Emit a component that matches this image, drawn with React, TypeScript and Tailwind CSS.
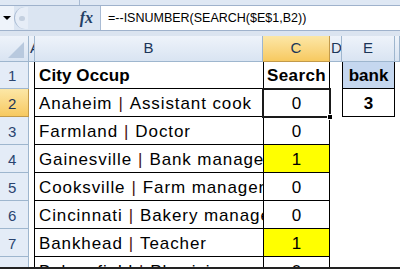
import React from 'react';

const rows = [
  { n: 1, b: 'City Occup', c: 'Search', bold: true },
  { n: 2, b: 'Anaheim | Assistant cook', c: '0' },
  { n: 3, b: 'Farmland | Doctor', c: '0' },
  { n: 4, b: 'Gainesville | Bank manager', c: '1', hit: true },
  { n: 5, b: 'Cooksville | Farm manager', c: '0' },
  { n: 6, b: 'Cincinnati | Bakery manager', c: '0' },
  { n: 7, b: 'Bankhead | Teacher', c: '1', hit: true },
  { n: 8, b: 'Bakersfield | Physician', c: '0' },
];

const hdr = 'flex items-center justify-center overflow-hidden border-r border-b border-[#9eb6ce] bg-gradient-to-b from-[#eef3fa] to-[#d9e4f2] text-[15px] text-[#1b3558]';
const selHdr = 'flex items-center justify-center overflow-hidden border-r border-b border-[#c29a4a] bg-gradient-to-b from-[#fce7a6] to-[#f7c95f] text-[15px] text-[#1b3558]';

function CellText({ text }: { text: string }) {
  const parts = text.split(' | ');
  if (parts.length < 2) return <span>{text}</span>;
  return (
    <span>
      {parts[0]}
      <span className="mx-[6px] text-[#4a1515]">|</span>
      {parts[1]}
    </span>
  );
}

export default function App() {
  return (
    <div className="relative flex h-[269px] w-[400px] flex-col overflow-hidden border-b-2 border-[#222] bg-[#dbe4f0] font-['Liberation_Sans',Arial,sans-serif]">
      {/* ribbon edge */}
      <div className="flex h-[6px] shrink-0 border-b border-[#9fb2cc] bg-[#dfe8f4]">
        <div className="w-[80px] border-r border-[#a9bbd3]" />
      </div>

      {/* formula bar */}
      <div className="flex h-[25px] shrink-0 border-b border-[#9fb2cc]">
        <div className="flex w-[100px] items-center bg-[#dbe5f2]">
          <div className="flex h-full w-[14px] items-center justify-center bg-[#eef3fa]">
            <div className="h-0 w-0 border-x-[4px] border-t-[4px] border-x-transparent border-t-black" />
          </div>
          <div className="flex h-[22px] w-[14px] items-center justify-center rounded-l-full border-l border-[#a9bbd3] bg-[#e6edf7]">
            <div className="h-[5px] w-[6px] rounded-full bg-[#c4d0e0]" />
          </div>
          <div className="flex-1" />
          <span className="mr-[7px] font-['Liberation_Serif',serif] text-[16px] font-bold italic leading-none text-[#243f66]">fx</span>
        </div>
        <div className="flex flex-1 items-center border-l border-[#a9bbd3] bg-white pl-[7px] text-[12.5px] text-black">
          =--ISNUMBER(SEARCH($E$1,B2))
        </div>
      </div>

      <div className="h-[5px] shrink-0 bg-[#dbe4f0]" />

      {/* grid */}
      <div className="relative grid shrink-0 grid-cols-[29px_6px_228px_67px_12px_53px_5px] grid-rows-[26px_27px_28px_28px_28px_28px_28px_28px_28px] bg-white">
        {/* column headers */}
        <div className="relative overflow-hidden border-r border-b border-[#9eb6ce] bg-gradient-to-b from-[#eef3fa] to-[#d9e4f2]">
          <div className="absolute bottom-[3px] right-[4px] h-0 w-0 border-b-[16px] border-l-[16px] border-b-[#b8c9de] border-l-transparent" />
        </div>
        <div className={hdr + ' justify-start pl-[1px]'}>A</div>
        <div className={hdr}>B</div>
        <div className={selHdr}>C</div>
        <div className={hdr + ' justify-start pl-[1px]'}>D</div>
        <div className={hdr}>E</div>
        <div className={hdr} />

        {rows.map((r) => (
          <React.Fragment key={r.n}>
            <div
              className={
                'flex items-end overflow-hidden border-r border-b pb-[3px] pl-[8px] text-[15px] leading-[18px] ' +
                (r.n === 2
                  ? 'border-[#c29a4a] bg-gradient-to-b from-[#fce7a6] to-[#f7c95f] text-[#1b3558]'
                  : 'border-[#9eb6ce] bg-[#e4ecf7] text-[#2a4470]')
              }
            >
              {r.n}
            </div>
            <div className="border-r border-black bg-white" />
            <div
              className={
                'flex items-end overflow-hidden whitespace-nowrap border-b border-black pb-[2px] pl-[4px] text-[17px] leading-[20px] text-black ' +
                (r.bold ? 'font-bold tracking-[0.1px]' : 'tracking-[0.9px]')
              }
            >
              <CellText text={r.b} />
            </div>
            <div
              className={
                'flex items-end justify-center border-l border-r border-b border-black pb-[2px] text-[17px] leading-[20px] text-black ' +
                (r.hit ? 'bg-[#ffff00] ' : 'bg-white ') +
                (r.bold ? 'font-bold tracking-[0.4px]' : '')
              }
            >
              {r.c}
            </div>
            <div className="bg-white" />
            <div
              className={
                'flex items-end justify-center pb-[2px] text-[17px] font-bold leading-[20px] text-black ' +
                (r.n === 1
                  ? 'border-x border-b border-black bg-[#c5d7ef]'
                  : r.n === 2
                  ? 'border-x border-b border-black bg-white'
                  : 'bg-white')
              }
            >
              {r.n === 1 ? 'bank' : r.n === 2 ? '3' : ''}
            </div>
            <div className="bg-white" />
          </React.Fragment>
        ))}

        {/* active cell C2 */}
        <div className="pointer-events-none absolute left-[262px] top-[52px] h-[30px] w-[69px] border-2 border-[#1a1a1a]">
          <div className="h-full w-full border border-white" />
          <div className="absolute -bottom-[4px] -right-[4px] h-[6px] w-[6px] border border-white bg-black" />
        </div>
      </div>
    </div>
  );
}
